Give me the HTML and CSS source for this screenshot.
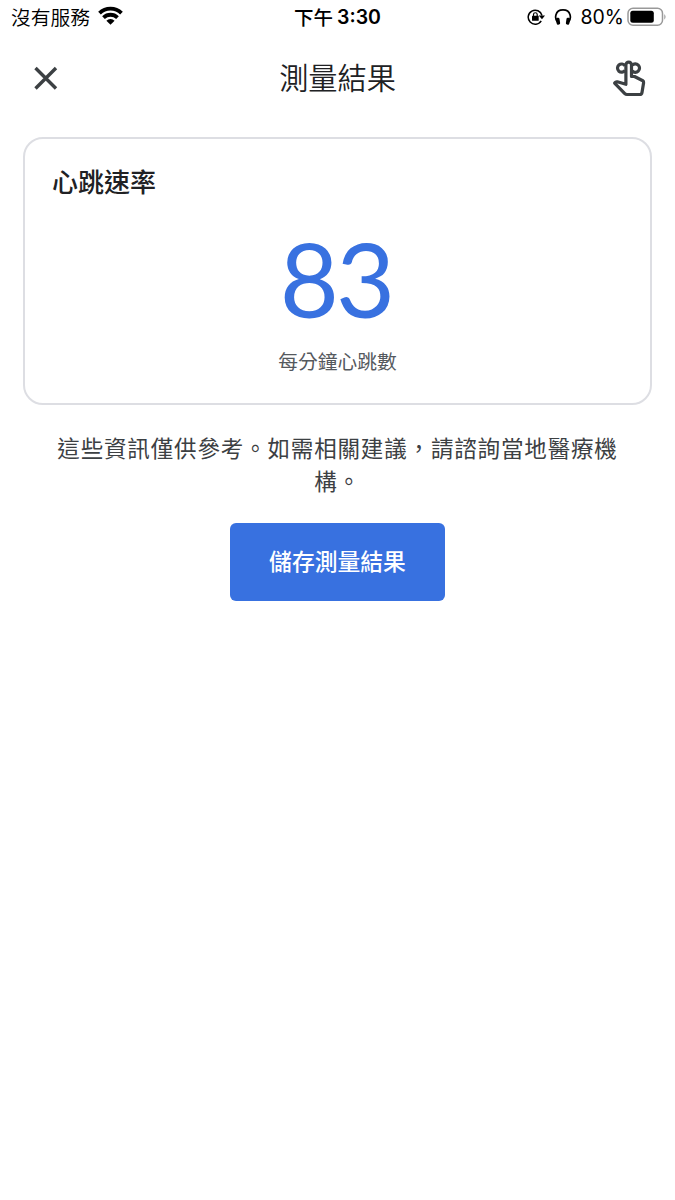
FILE: index.html
```html
<!DOCTYPE html>
<html lang="zh-Hant">
<head>
<meta charset="utf-8">
<title>測量結果</title>
<link rel="stylesheet" href="styles.css">
</head>
<body>
<div class="status">
  <div class="carrier">沒有服務
    <svg class="wifi" width="25" height="19" viewBox="0 0 25 19"><g fill="none" stroke="#000" stroke-width="3.8"><path d="M1.5 7.1a15.7 15.7 0 0 1 22 0"/><path d="M5.5 11.6a10 10 0 0 1 14 0"/></g><path d="M12.5 18.8 8.4 14.7a5.8 5.8 0 0 1 8.2 0z"/></svg>
  </div>
  <div class="clock"><span>下午</span><span class="time">3:30</span></div>
  <div class="indicators">
    <svg width="18" height="18" viewBox="0 0 18 18"><path d="M14.2 12.8A7 7 0 1 1 15 7.5" fill="none" stroke="#000" stroke-width="1.5"/><path d="M11.7 7.6H18L15 11.3z"/><rect x="5" y="7.8" width="6.7" height="5" rx=".6"/><path d="M6.5 8.2V6.6a1.85 1.85 0 0 1 3.7 0v1.6" fill="none" stroke="#000" stroke-width="1.2"/></svg>
    <svg class="phones" width="18" height="18" viewBox="0 0 18 18"><path d="M3.7 14.5C.2 10.5.8 1.8 9 1.8s8.8 8.7 5.3 12.7" fill="none" stroke="#000" stroke-width="1.7"/><rect x="2.3" y="9.7" width="3.5" height="7" rx="1.4" transform="rotate(-9 4 13)"/><rect x="12.2" y="9.7" width="3.5" height="7" rx="1.4" transform="rotate(9 14 13)"/></svg>
    <span class="percent">80%</span>
    <svg class="battery" width="40" height="20" viewBox="0 0 40 20"><rect x="1" y="1.3" width="34.5" height="17" rx="5" fill="none" stroke="#999" stroke-width="1.5"/><rect x="3.3" y="3.8" width="23.5" height="12" rx="2.5"/><path d="M37.3 7q2.5 2.8 0 5.8z" fill="#999"/></svg>
  </div>
</div>
<header class="bar">
  <svg class="close" width="26" height="26" viewBox="0 0 26 26"><path d="M2.5 3l20.5 20.5M23 3 2.5 23.5" stroke="#3c4043" stroke-width="3.4"/></svg>
  <h1>測量結果</h1>
  <svg class="hand" width="60" height="56" viewBox="0 0 60 56"><g fill="none" stroke="#3c4043" stroke-width="3.2" stroke-linejoin="round"><path d="M25.9 34.3V15a2.8 2.9 0 0 1 5.6 0V26.500h3l8.300 4.200q1 .6.800 2L42 42.400q-.3 2.100-2.300 2.100H27q-1.300 0-2.200-.9L14.600 33.200l1-1q.7-.6 1.700-.4z"/><path d="M25 15.800a4.100 4.100 0 1 0 0 4.600M32.200 15.300a4.200 4.200 0 1 1 0 5.600"/></g></svg>
</header>
<main>
  <section class="card">
    <h2>心跳速率</h2>
    <div class="value">83</div>
    <div class="unit">每分鐘心跳數</div>
  </section>
  <p class="note">這些資訊僅供參考。如需相關建議，請諮詢當地醫療機構。</p>
  <button class="save">儲存測量結果</button>
</main>
</body>
</html>
```
FILE: styles.css
```css
* { box-sizing: border-box; }
body { margin: 0; background: #fff; color: #202124; font-family: "Noto Sans CJK TC", sans-serif; }
svg { display: block; flex: none; }
.status { height: 34px; display: grid; grid-template-columns: 1fr auto 1fr; align-items: center; padding: 0 8px 0 11px; color: #000; font-size: 20px; line-height: 34px; }
.carrier { display: flex; align-items: center; gap: 8px; font-weight: 350; font-size: 19.8px; }
.wifi { margin-top: -3px; }
.clock { display: flex; gap: 4px; margin-right: 3px; font-weight: 500; font-size: 19.5px; }
.time, .percent { font-family: Inter, sans-serif; }
.time { font-weight: 600; }
.indicators { display: flex; align-items: center; justify-content: flex-end; }
.phones { margin-left: 9px; }
.percent { margin-left: 8px; font-size: 19.5px; }
.battery { margin: -1px 0 0 3px; }
.bar { height: 88px; display: grid; grid-template-columns: 75px 1fr 75px; align-items: center; }
.close { margin-left: 33px; }
.hand { justify-self: start; }
h1 { margin: 0; padding-bottom: 4px; text-align: center; font-size: 29.2px; font-weight: 350; line-height: 44px; }
main { padding: 15px 23px; display: flex; flex-direction: column; align-items: center; }
.card { width: 629px; height: 268px; border: 2px solid #dddee3; border-radius: 20px; padding: 23px 27px; text-align: center; }
h2 { margin: 0; text-align: left; font-size: 26px; font-weight: 500; line-height: 38px; }
.value { margin-top: 19px; height: 120px; font: 102px/120px Lato, sans-serif; letter-spacing: -3px; text-indent: -3px; color: #3871e0; }
.unit { margin-top: 7px; font-size: 19.8px; line-height: 30px; color: #55595e; }
.note { width: 572px; margin: 26px 0 0; text-align: center; font-size: 22.5px; letter-spacing: .85px; line-height: 33px; color: #3c4043; }
.save { margin-top: 26px; width: 215px; height: 78px; border: 0; border-radius: 6px; background: #3871e0; color: #fff; font: 500 22.8px/34px "Noto Sans CJK TC", sans-serif; padding: 0 0 2px; }
```
